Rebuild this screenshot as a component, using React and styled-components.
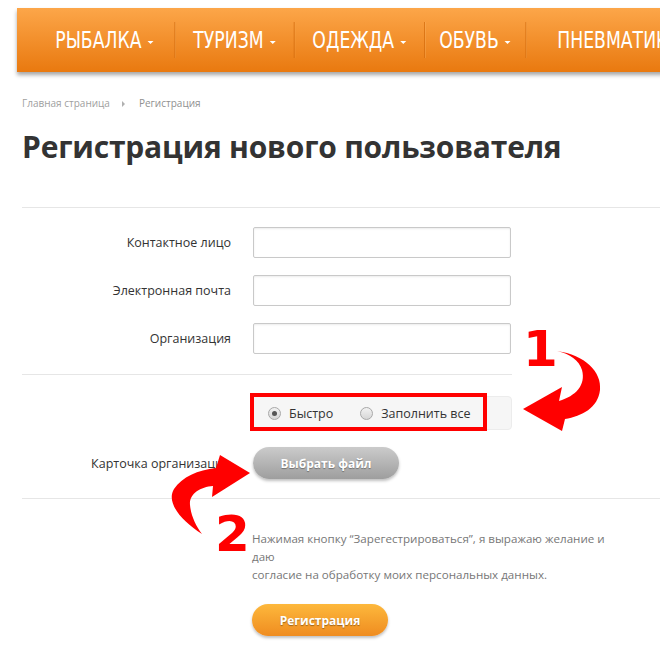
import React from 'react'
import styled, { createGlobalStyle } from 'styled-components'

const GlobalStyle = createGlobalStyle`
  html, body {
    margin: 0;
    padding: 0;
    background: #fff;
  }
  body {
    font-family: 'Open Sans', 'DejaVu Sans', sans-serif;
    color: #333;
    overflow: hidden;
  }
`

const Page = styled.div`
  position: relative;
  width: 660px;
  height: 658px;
  overflow: hidden;
  padding-top: 8px;
  box-sizing: border-box;
`

const Nav = styled.nav`
  margin-left: 17px;
  width: 700px;
  height: 64px;
  overflow: hidden;
  background: linear-gradient(#fca649, #e9790f);
  box-shadow: 0 3px 4px rgba(0, 0, 0, 0.35);
`

/* the menu face is a narrow font; squeeze the whole track horizontally */
const NavTrack = styled.div`
  display: flex;
  align-items: center;
  height: 100%;
  padding-left: 27px;
  transform: scaleX(0.75);
  transform-origin: left center;
`

const NavItem = styled.div`
  display: flex;
  flex-shrink: 0;
  align-items: center;
  height: 36px;
  padding: 0 ${(p) => p.$padRight ?? 28}px 0 ${(p) => p.$padLeft ?? 24}px;
  color: #fff;
  font-family: 'DejaVu Sans', sans-serif;
  font-size: 23px;
  white-space: nowrap;
  border-left: ${(p) => (p.$first ? 'none' : '1px solid #d46d0e')};
  box-shadow: ${(p) => (p.$first ? 'none' : 'inset 1px 0 0 rgba(255, 200, 130, 0.3)')};
`

const Caret = styled.span`
  display: inline-block;
  margin-left: 8px;
  margin-top: 5px;
  border-left: 4px solid transparent;
  border-right: 4px solid transparent;
  border-top: 3px solid #fff;
`

const Content = styled.div`
  padding-left: 22px;
`

const Crumbs = styled.div`
  display: flex;
  align-items: center;
  margin-top: 24px;
  font-size: 10px;
  line-height: 15px;
  color: #a0a0a0;
`

const CrumbArrow = styled.span`
  display: inline-block;
  margin: 0 14px 0 12px;
  border-top: 3px solid transparent;
  border-bottom: 3px solid transparent;
  border-left: 3px solid #b0b0b0;
`

const CrumbCurrent = styled.span`
  color: #909090;
`

const Title = styled.h1`
  margin: 16px 0 0;
  font-size: 30px;
  line-height: 40px;
  font-weight: 700;
  color: #333;
  letter-spacing: -0.2px;
`

const Rule = styled.hr`
  margin: ${(p) => p.$top || 0}px 0 0;
  border: none;
  border-top: 1px solid #e6e6e6;
  width: ${(p) => (p.$short ? '490px' : '100%')};
`

const Grid = styled.div`
  display: grid;
  grid-template-columns: 209px 258px;
  column-gap: 22px;
  row-gap: 17px;
  align-items: center;
  padding: ${(p) => p.$pad || '19px 0 20px'};
`

const Label = styled.label`
  text-align: right;
  font-size: 12.5px;
  color: #333;
  white-space: nowrap;
`

const Input = styled.input`
  box-sizing: border-box;
  width: 258px;
  height: 31px;
  margin: 0;
  border: 1px solid #c9c9c9;
  border-radius: 2px;
  box-shadow: inset 0 1px 2px rgba(0, 0, 0, 0.08);
  background: #fff;
`

const RadioWrap = styled.div`
  position: relative;
  margin-left: -3px;
`

const RadioBox = styled.div`
  display: flex;
  align-items: center;
  gap: 27px;
  box-sizing: border-box;
  width: 262px;
  height: 34px;
  padding-left: 17px;
  background: #f6f6f6;
  border: 1px solid #ececec;
  border-radius: 4px;
`

const RadioOption = styled.label`
  display: flex;
  align-items: center;
  gap: 8px;
  font-size: 12.5px;
  color: #333;
`

const RadioDot = styled.span`
  position: relative;
  width: 11px;
  height: 11px;
  border-radius: 50%;
  border: 1px solid #a8a8a8;
  background: linear-gradient(#f2f2f2, #d6d6d6);
  &::after {
    content: '';
    display: ${(p) => (p.$checked ? 'block' : 'none')};
    position: absolute;
    left: 3px;
    top: 3px;
    width: 5px;
    height: 5px;
    border-radius: 50%;
    background: #555;
  }
`

const Highlight = styled.div`
  position: absolute;
  left: 0;
  top: -3px;
  width: 237px;
  height: 38px;
  box-sizing: border-box;
  border: 4px solid #ff0000;
`

const PillButton = styled.button`
  width: ${(p) => p.$w}px;
  height: 32px;
  border: none;
  border-radius: 16px;
  font-family: 'Open Sans', sans-serif;
  font-size: 12px;
  font-weight: 700;
  color: #fff;
  text-shadow: 0 1px 1px rgba(0, 0, 0, 0.35);
  background: ${(p) =>
    p.$orange
      ? 'linear-gradient(#fdb83c, #ef8c20)'
      : 'linear-gradient(#cbcbcb, #9e9e9e)'};
  box-shadow: 0 2px 3px rgba(0, 0, 0, 0.25);
  justify-self: start;
`

const Consent = styled.div`
  padding: 31px 0 0 230px;
`

const ConsentText = styled.p`
  margin: 0;
  width: 356px;
  font-size: 11.6px;
  line-height: 18px;
  color: #777;
`

const RegRow = styled.div`
  margin-top: 20px;
`

const Overlay = styled.svg`
  position: absolute;
  left: 0;
  top: 0;
  pointer-events: none;
`

const Mark = styled.span`
  position: absolute;
  left: ${(p) => p.$x}px;
  top: ${(p) => p.$y}px;
  font-family: 'DejaVu Sans', sans-serif;
  font-weight: 700;
  font-size: 50px;
  line-height: 50px;
  color: #ff0000;
`

const navItems = [
  { title: 'РЫБАЛКА', caret: true },
  { title: 'ТУРИЗМ', caret: true, padRight: 24 },
  { title: 'ОДЕЖДА', caret: true, padRight: 24 },
  { title: 'ОБУВЬ', caret: true, padLeft: 19, padRight: 20 },
  { title: 'ПНЕВМАТИКА', caret: false, padLeft: 41 },
]

export default function App() {
  return (
    <Page>
      <GlobalStyle />
      <Nav>
        <NavTrack>
          {navItems.map((item, i) => (
            <NavItem
              key={item.title}
              $first={i === 0}
              $padLeft={item.padLeft}
              $padRight={item.padRight}
            >
              {item.title}
              {item.caret && <Caret />}
            </NavItem>
          ))}
        </NavTrack>
      </Nav>

      <Content>
        <Crumbs>
          <span>Главная страница</span>
          <CrumbArrow />
          <CrumbCurrent>Регистрация</CrumbCurrent>
        </Crumbs>
        <Title>Регистрация нового пользователя</Title>

        <Rule $top={40} />
        <Grid>
          <Label>Контактное лицо</Label>
          <Input type="text" />
          <Label>Электронная почта</Label>
          <Input type="text" />
          <Label>Организация</Label>
          <Input type="text" />
        </Grid>

        <Rule $short />
        <Grid $pad="21px 0 19px">
          <span />
          <RadioWrap>
            <RadioBox>
              <RadioOption>
                <RadioDot $checked />
                Быстро
              </RadioOption>
              <RadioOption>
                <RadioDot />
                Заполнить все
              </RadioOption>
            </RadioBox>
            <Highlight />
          </RadioWrap>
          <Label>Карточка организации</Label>
          <PillButton $w={146}>Выбрать файл</PillButton>
        </Grid>

        <Rule />
        <Consent>
          <ConsentText>
            Нажимая кнопку “Зарегестрироваться”, я выражаю желание и даю
            <br />
            согласие на обработку моих персональных данных.
          </ConsentText>
          <RegRow>
            <PillButton $w={136} $orange>
              Регистрация
            </PillButton>
          </RegRow>
        </Consent>
      </Content>

      <Overlay width="660" height="658" viewBox="0 0 660 658">
        <path
          fill="#ff0000"
          d="M557 351 C585 355 602 372 600 390 C598 408 582 416 565 419 L562 431 L523 409 L562 387 L559 401 C576 396 586 385 582 370 C579 360 570 354 557 351 Z"
        />
        <path
          fill="#ff0000"
          d="M202 534 C180 520 166 502 174 489 C182 477 198 470 216 468 L220 455 L250 473 L212 497 L213 486 C200 487 189 494 190 505 C191 516 196 526 202 534 Z"
        />
      </Overlay>
      <Mark $x={523} $y={324}>1</Mark>
      <Mark $x={215} $y={509}>2</Mark>
    </Page>
  )
}
